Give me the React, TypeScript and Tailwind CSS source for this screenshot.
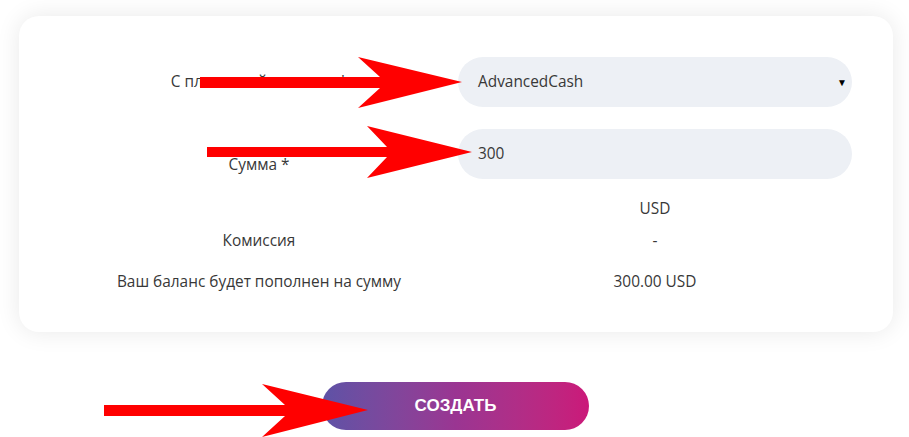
const font = { fontFamily: '"Open Sans", "Noto Sans", sans-serif' };

function Arrows() {
  return (
    <svg className="pointer-events-none absolute left-0 top-0" width="909" height="437" viewBox="0 0 909 437">
      <polygon fill="#ff0000" points="200,77 380,77 358,57 462,82 358,108 380,88 200,88" />
      <polygon fill="#ff0000" points="207,147 387,147 367,126 472,152 367,178 387,157 207,157" />
      <polygon fill="#ff0000" points="104,405 285,405 262,384 368,410 262,437 285,416 104,416" />
    </svg>
  );
}

export default function App() {
  return (
    <div className="relative h-[437px] w-[909px] overflow-hidden bg-white text-[15.4px] text-[#383838]" style={font}>
      <div className="px-[19px] pt-[16px]">
        <div className="h-[316px] w-[874px] rounded-[20px] bg-white px-[41px] pt-[41px] shadow-[0_0_24px_rgba(0,0,0,0.09)]">
          <div className="grid grid-cols-[398px_394px] gap-y-[22px]">
            <div className="flex items-center justify-center">С платежной системы *</div>
            <div className="relative flex h-[50px] items-center rounded-full bg-[#edf0f5] pl-[20px] pr-[5px]">
              <span>AdvancedCash</span>
              <span className="ml-auto text-[10px] text-black">▼</span>
            </div>

            <div className="flex items-end justify-center pb-[3px]">Сумма *</div>
            <div className="flex h-[50px] items-center rounded-full bg-[#edf0f5] pl-[20px]">300</div>
          </div>

          <div className="grid grid-cols-[398px_394px]">
            <div />
            <div className="mt-[21px] flex h-[18px] items-center justify-center">USD</div>
            <div className="mt-[14px] flex h-[18px] items-center justify-center">Комиссия</div>
            <div className="mt-[14px] flex h-[18px] items-center justify-center">-</div>
            <div className="mt-[23px] flex h-[18px] items-center justify-center">Ваш баланс будет пополнен на сумму</div>
            <div className="mt-[23px] flex h-[18px] items-center justify-center">300.00 USD</div>
          </div>
        </div>
      </div>

      <div className="mt-[50px] flex justify-center">
        <button
          className="ml-[2px] h-[48px] w-[267px] rounded-full bg-gradient-to-r from-[#5d52a6] via-[#9a3592] to-[#cb1879] text-[17px] font-bold text-white"
          style={{ fontFamily: '"Liberation Sans", Arial, sans-serif' }}
        >
          СОЗДАТЬ
        </button>
      </div>

      <Arrows />
    </div>
  );
}
